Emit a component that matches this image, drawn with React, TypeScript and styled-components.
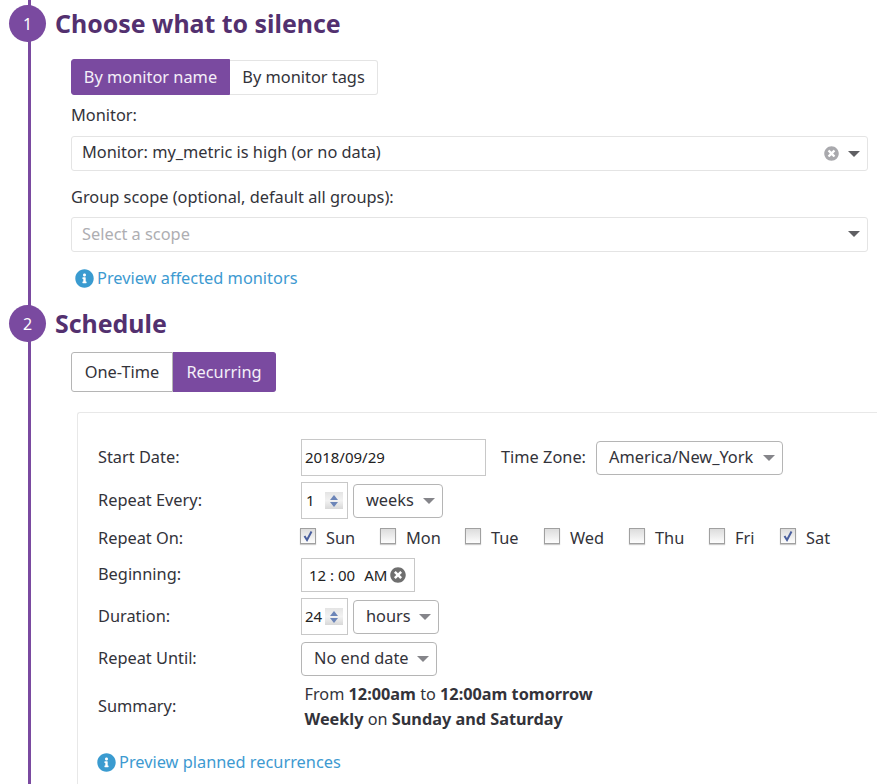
import React from "react";
import styled, { createGlobalStyle } from "styled-components";
import { FaInfoCircle, FaTimesCircle } from "react-icons/fa";

const purple = "#7a4aa0";

const days = [
  { name: "Sun", checked: true, width: 80 },
  { name: "Mon", checked: false, width: 85 },
  { name: "Tue", checked: false, width: 79 },
  { name: "Wed", checked: false, width: 85 },
  { name: "Thu", checked: false, width: 80 },
  { name: "Fri", checked: false, width: 71 },
  { name: "Sat", checked: true, width: 60 },
];

const Spinner = () => (
  <SpinBox>
    <svg width="8" height="5" viewBox="0 0 8 5"><path d="M4 0 8 5H0z" fill="#6c85b8" /></svg>
    <svg width="8" height="5" viewBox="0 0 8 5"><path d="M4 5 8 0H0z" fill="#6c85b8" /></svg>
  </SpinBox>
);

const App: React.FC = () => {
  return (
    <Page>
      <GlobalStyle />
      <Step $height={300}>
        <Bullet>1</Bullet>
        <Heading $height={59}>Choose what to silence</Heading>
        <Toggle>
          <ToggleButton $active $width={159} $height={36}>By monitor name</ToggleButton>
          <ToggleButton $width={148} $height={35}>By monitor tags</ToggleButton>
        </Toggle>
        <FieldLabel $top={8} $bottom={9}>Monitor:</FieldLabel>
        <Combo>
          <span>Monitor: my_metric is high (or no data)</span>
          <ComboIcons>
            <FaTimesCircle size={15} color="#a9a9ad" />
            <Caret />
          </ComboIcons>
        </Combo>
        <FieldLabel $top={14} $bottom={8}>Group scope (optional, default all groups):</FieldLabel>
        <Combo $placeholder>
          <span>Select a scope</span>
          <ComboIcons><Caret /></ComboIcons>
        </Combo>
        <PreviewLink $indent={4} $top={14}>
          <FaInfoCircle size={19} color="#3a9bd0" />
          Preview affected monitors
        </PreviewLink>
      </Step>

      <Step $height={484}>
        <Bullet>2</Bullet>
        <Heading $height={52}>Schedule</Heading>
        <Toggle>
          <ToggleButton $width={102} $height={40} $dark>One-Time</ToggleButton>
          <ToggleButton $active $width={103} $height={40}>Recurring</ToggleButton>
        </Toggle>
        <Panel>
          <FormRow $height={37}>
            <RowLabel>Start Date:</RowLabel>
            <TextBox $width={185}>2018/09/29</TextBox>
            <ZoneLabel>Time Zone:</ZoneLabel>
            <SelectBox $width={187}>America/New_York<SelectCaret /></SelectBox>
          </FormRow>
          <FormRow $height={37} $top={6}>
            <RowLabel>Repeat Every:</RowLabel>
            <NumberBox>1<Spinner /></NumberBox>
            <SelectBox $width={90} $left={5}>weeks<SelectCaret /></SelectBox>
          </FormRow>
          <FormRow $height={24} $top={7}>
            <DayLabel>Repeat On:</DayLabel>
            {days.map((day) => (
              <Day key={day.name} style={{ width: day.width }}>
                <CheckBox>
                  {day.checked && (
                    <svg width="12" height="12" viewBox="0 0 12 12">
                      <path d="M2.5 6 5 10 9.5 1.5" fill="none" stroke="#4a5f9e" strokeWidth="2" />
                    </svg>
                  )}
                </CheckBox>
                {day.name}
              </Day>
            ))}
          </FormRow>
          <FormRow $height={34} $top={8}>
            <RowLabel>Beginning:</RowLabel>
            <TimeBox>
              12 : 00
              <Meridiem>AM</Meridiem>
              <FaTimesCircle size={16} color="#6f6f6f" />
            </TimeBox>
          </FormRow>
          <FormRow $height={37} $top={6}>
            <RowLabel>Duration:</RowLabel>
            <NumberBox $tight>24<Spinner /></NumberBox>
            <SelectBox $width={86} $left={5}>hours<SelectCaret /></SelectBox>
          </FormRow>
          <FormRow $height={34} $top={7}>
            <RowLabel>Repeat Until:</RowLabel>
            <SelectBox $width={136}>No end date<SelectCaret /></SelectBox>
          </FormRow>
          <FormRow $height={50} $top={6}>
            <RowLabel>Summary:</RowLabel>
            <Summary>
              <div>From <b>12:00am</b> to <b>12:00am tomorrow</b></div>
              <div><b>Weekly</b> on <b>Sunday and Saturday</b></div>
            </Summary>
          </FormRow>
          <PreviewLink $indent={-1} $top={18}>
            <FaInfoCircle size={19} color="#3a9bd0" />
            Preview planned recurrences
          </PreviewLink>
        </Panel>
      </Step>
    </Page>
  );
};

export default App;

// Styles
const GlobalStyle = createGlobalStyle`
  html, body { margin: 0; padding: 0; height: 784px; overflow: hidden; background: #fff; }
  body { font-family: "Noto Sans", "Open Sans", sans-serif; font-size: 16.35px; color: #33333a; }
  * { box-sizing: border-box; }
`;

const Page = styled.div`width: 877px; height: 784px; overflow: hidden; padding-left: 28px;`;

const Step = styled.section<{ $height: number }>`
  position: relative;
  height: ${(p) => p.$height}px;
  border-left: 3px solid ${purple};
  padding-left: 40px;
`;

const Bullet = styled.div`
  position: absolute;
  left: -22px;
  top: 5px;
  width: 37px;
  height: 37px;
  border-radius: 50%;
  background: ${purple};
  color: #fff;
  font-size: 16px;
  display: flex;
  align-items: center;
  justify-content: center;
`;

const Heading = styled.h2<{ $height: number }>`
  margin: 0 0 0 -16px;
  padding-top: 5px;
  height: ${(p) => p.$height}px;
  font-size: 24.9px;
  line-height: 36px;
  font-weight: 700;
  color: #53306f;
`;

const Toggle = styled.div`display: flex; align-items: center;`;

const ToggleButton = styled.div<{ $active?: boolean; $width: number; $height: number; $dark?: boolean }>`
  width: ${(p) => p.$width}px;
  height: ${(p) => p.$height}px;
  display: flex;
  align-items: center;
  justify-content: center;
  background: ${(p) => (p.$active ? purple : "#fff")};
  color: ${(p) => (p.$active ? "#f4eff8" : "#33333a")};
  border: 1px solid ${(p) => (p.$active ? purple : p.$dark ? "#b5b5b5" : "#e4e4e4")};
  &:first-child { border-radius: 3px 0 0 3px; }
  &:last-child { border-radius: 0 3px 3px 0; border-left: none; }
`;

const FieldLabel = styled.div<{ $top: number; $bottom: number }>`
  height: 24px;
  line-height: 24px;
  margin-top: ${(p) => p.$top}px;
  margin-bottom: ${(p) => p.$bottom}px;
`;

const Combo = styled.div<{ $placeholder?: boolean }>`
  width: 797px;
  height: 35px;
  border: 1px solid #e4e4e4;
  border-radius: 3px;
  padding: 0 7px 0 10px;
  display: flex;
  align-items: center;
  justify-content: space-between;
  color: ${(p) => (p.$placeholder ? "#aeaeb2" : "#33333a")};
  span:first-child { margin-bottom: ${(p) => (p.$placeholder ? 2 : 4)}px; }
`;

const ComboIcons = styled.div`display: flex; align-items: center; gap: 9px;`;

const Caret = styled.span`
  width: 0;
  height: 0;
  border-left: 6px solid transparent;
  border-right: 6px solid transparent;
  border-top: 6px solid #5f5f63;
`;

const PreviewLink = styled.div<{ $indent: number; $top: number }>`
  display: flex;
  align-items: center;
  gap: 3px;
  height: 24px;
  margin-left: ${(p) => p.$indent}px;
  margin-top: ${(p) => p.$top}px;
  color: #3d9ad1;
`;

const Panel = styled.div`
  width: 820px;
  margin: 20px 0 0 6px;
  padding: 26px 0 0 20px;
  border-top: 1px solid #e8e8e8;
  border-left: 1px solid #e8e8e8;
  border-radius: 3px 0 0 0;
  height: 400px;
`;

const FormRow = styled.div<{ $height: number; $top?: number }>`
  display: flex;
  align-items: center;
  height: ${(p) => p.$height}px;
  margin-top: ${(p) => p.$top ?? 0}px;
`;

const RowLabel = styled.div`width: 203px; flex: none; padding-bottom: 2px;`;

const DayLabel = styled.div`width: 203px; flex: none;`;

const TextBox = styled.div<{ $width: number }>`
  width: ${(p) => p.$width}px;
  height: 37px;
  border: 1px solid #c8c8c8;
  display: flex;
  align-items: center;
  padding: 0 0 2px 3px;
  font-size: 15px;
  color: #222;
`;

const ZoneLabel = styled.div`margin: 0 10px 0 15px; padding-bottom: 2px;`;

const SelectBox = styled.div<{ $width: number; $left?: number }>`
  width: ${(p) => p.$width}px;
  height: 34px;
  margin-left: ${(p) => p.$left ?? 0}px;
  border: 1px solid #b5b5b5;
  border-radius: 4px;
  padding: 0 7px 2px 12px;
  display: flex;
  align-items: center;
  justify-content: space-between;
`;

const SelectCaret = styled.span`
  width: 0;
  height: 0;
  margin-top: 2px;
  border-left: 6px solid transparent;
  border-right: 6px solid transparent;
  border-top: 6px solid #85858a;
`;

const NumberBox = styled.div<{ $tight?: boolean }>`
  width: 47px;
  height: 37px;
  border: 1px solid #c8c8c8;
  display: flex;
  align-items: center;
  justify-content: space-between;
  padding: 0 4px 2px ${(p) => (p.$tight ? 3 : 4)}px;
  font-size: 15px;
  color: #222;
`;

const SpinBox = styled.div`
  width: 18px;
  height: 17px;
  margin-top: 2px;
  background: linear-gradient(#e4e4e4, #f2f2f2 50%, #d8d8d8);
  display: flex;
  flex-direction: column;
  align-items: center;
  justify-content: center;
  gap: 2px;
`;

const Day = styled.label`display: flex; align-items: center; gap: 10px;`;

const CheckBox = styled.span`
  width: 16px;
  height: 16px;
  margin: -4px 0 0 -1px;
  flex: none;
  border: 1px solid #a0a0a0;
  background: linear-gradient(#dcdcdc, #fdfdfd);
  box-shadow: 0 1px 1px #ccc;
  display: flex;
  align-items: center;
  justify-content: center;
`;

const TimeBox = styled.div`
  width: 114px;
  height: 34px;
  border: 1px solid #c8c8c8;
  display: flex;
  align-items: center;
  gap: 3px;
  padding-left: 7px;
  font-size: 15px;
  color: #222;
`;

const Meridiem = styled.span`margin-left: 6px;`;

const Summary = styled.div`
  padding-left: 3.5px;
  font-size: 16.25px;
  line-height: 25px;
  b { font-weight: 700; }
`;
